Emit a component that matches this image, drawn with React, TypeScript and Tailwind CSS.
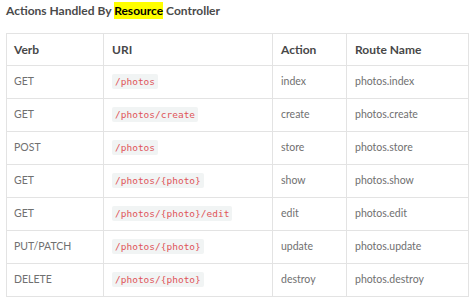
import React from 'react';

const rows: [string, string, string, string][] = [
  ['GET', '/photos', 'index', 'photos.index'],
  ['GET', '/photos/create', 'create', 'photos.create'],
  ['POST', '/photos', 'store', 'photos.store'],
  ['GET', '/photos/{photo}', 'show', 'photos.show'],
  ['GET', '/photos/{photo}/edit', 'edit', 'photos.edit'],
  ['PUT/PATCH', '/photos/{photo}', 'update', 'photos.update'],
  ['DELETE', '/photos/{photo}', 'destroy', 'photos.destroy'],
];

export default function App() {
  return (
    <div className="w-[474px] h-[301px] bg-white overflow-hidden pl-[6px] pt-[3px]" style={{ fontFamily: 'Lato, "Open Sans", sans-serif' }}>
      <h2 className="text-[12px] font-bold text-[#4a4a4a] leading-[16px]">
        Actions Handled By <span className="bg-[#ffff00] text-black py-[1px]">Resource</span> Controller
      </h2>
      <table className="mt-[14px] border-collapse text-[10.5px] text-[#707070]">
        <thead>
          <tr className="h-[32px] text-[12px]">
            <th className="w-[97px] border border-[#e3e3e3] pl-[7px] text-left font-bold text-[#484848]">Verb</th>
            <th className="w-[169px] border border-[#e3e3e3] pl-[8px] text-left font-bold text-[#484848]">URI</th>
            <th className="w-[74px] border border-[#e3e3e3] pl-[8px] text-left font-bold text-[#484848]">Action</th>
            <th className="w-[122px] border border-[#e3e3e3] pl-[8px] text-left font-bold text-[#484848]">Route Name</th>
          </tr>
        </thead>
        <tbody>
          {rows.map(([verb, uri, action, name], i) => (
            <tr key={i} className="h-[33px]">
              <td className="border border-[#e3e3e3] pl-[7px]">{verb}</td>
              <td className="border border-[#e3e3e3] pl-[8px]">
                <code className="bg-[#f1f4f4] text-[#e0555a] px-[3px] py-[2px] rounded-[2px] text-[9.5px]" style={{ fontFamily: '"DejaVu Sans Mono", monospace' }}>
                  {uri}
                </code>
              </td>
              <td className="border border-[#e3e3e3] pl-[8px]">{action}</td>
              <td className="border border-[#e3e3e3] pl-[8px]">{name}</td>
            </tr>
          ))}
        </tbody>
      </table>
    </div>
  );
}
